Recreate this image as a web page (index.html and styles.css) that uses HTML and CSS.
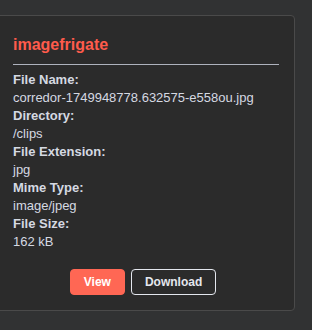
FILE: index.html
```html
<!DOCTYPE html>
<html lang="en">
<head>
    <meta charset="UTF-8">
    <meta name="viewport" content="width=device-width, initial-scale=1.0">
    <title>File Details</title>
    <link rel="stylesheet" href="styles.css">
</head>
<body>
    <div class="card">
        <h2 class="card-title">imagefrigate</h2>
        <hr class="divider">

        <!-- File info -->
        <dl class="file-info">
            <dt>File Name:</dt>
            <dd>corredor-1749948778.632575-e558ou.jpg</dd>
            <dt>Directory:</dt>
            <dd>/clips</dd>
            <dt>File Extension:</dt>
            <dd>jpg</dd>
            <dt>Mime Type:</dt>
            <dd>image/jpeg</dd>
            <dt>File Size:</dt>
            <dd>162 kB</dd>
        </dl>

        <div class="actions">
            <button class="btn btn-view">View</button>
            <button class="btn btn-download">Download</button>
        </div>
    </div>
</body>
</html>
```

FILE: styles.css
```css
body {
    font-family: "Liberation Sans", Arial, sans-serif;
    margin: 0;
    padding: 15px 0 0 0;
    background-color: #313233;
    color: #d5d9e2;
}

.card {
    width: 266px;
    margin-left: -4px;
    padding: 16px 15px 15px 16px;
    background: #2b2b2b;
    border: 1px solid #4a4a4a;
    border-radius: 4px;
}

.card-title {
    margin: 0;
    padding-top: 3px;
    font-size: 16px;
    font-weight: 700;
    line-height: 20px;
    color: #ff5b4c;
}

.divider {
    margin: 9px 0 6px 0;
    border: none;
    border-top: 1px solid #aeb2bd;
}

.file-info {
    margin: 0;
    font-size: 13px;
    line-height: 18px;
}

.file-info dt {
    font-weight: 700;
}

.file-info dd {
    margin: 0;
}

.actions {
    display: flex;
    justify-content: center;
    gap: 6px;
    margin-top: 18px;
    padding-right: 6px;
}

.btn {
    font-family: inherit;
    font-size: 12px;
    font-weight: 700;
    height: 26px;
    padding: 0 13px;
    border-radius: 4px;
    cursor: pointer;
}

.btn-view {
    background-color: #ff6754;
    color: #fff;
    border: 1px solid #ff6754;
}

.btn-download {
    background: transparent;
    color: #e4e7ee;
    border: 1px solid #e4e7ee;
}
```
